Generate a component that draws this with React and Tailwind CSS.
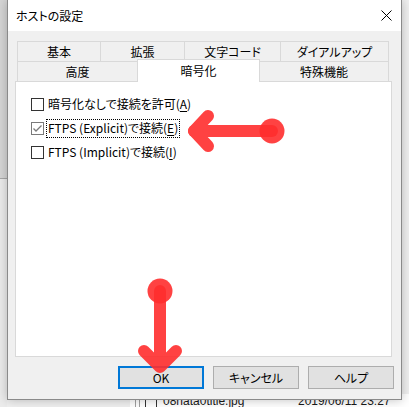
import React from 'react';

const jp = "font-['Noto_Sans_CJK_JP','Noto_Sans',sans-serif] [font-feature-settings:'palt']";

const row1 = [
  { label: '基本', w: 'w-[83px]' },
  { label: '拡張', w: 'w-[84px]' },
  { label: '文字コード', w: 'w-[96px]' },
  { label: 'ダイアルアップ', w: 'w-[109px]', last: true },
];

const row2 = [
  { label: '高度', w: 'w-[120px]' },
  { label: '暗号化', w: 'w-[123px]', selected: true },
  { label: '特殊機能', w: 'w-[129px]', last: true, noLeft: true },
];

function Tab({ label, w, selected, last, noLeft }) {
  if (selected) {
    return (
      <div className={`${w} relative z-10 -mt-[2px] h-[23px] flex items-center justify-center bg-white border-t border-l border-r border-[#d9d9d9] text-[12px] text-black`}>
        {label}
      </div>
    );
  }
  return (
    <div
      className={`${w} h-[20px] flex items-center justify-center bg-[#f0f0f0] border-t border-[#d9d9d9] text-[12px] text-black ${noLeft ? '' : 'border-l'} ${last ? 'border-r' : ''}`}
    >
      {label}
    </div>
  );
}

function Checkbox({ checked }) {
  return (
    <div className={`w-[13px] h-[13px] bg-white border flex items-center justify-center ${checked ? 'border-[#7a7a7a]' : 'border-[#333333]'}`}>
      {checked && (
        <svg width="11" height="11" viewBox="0 0 11 11">
          <path d="M1.5 5.5 L4 8 L9.5 2.5" fill="none" stroke="#7a7a7a" strokeWidth="1.3" />
        </svg>
      )}
    </div>
  );
}

function Option({ checked, focused, children }) {
  return (
    <div className="h-[24px] flex items-center">
      <Checkbox checked={checked} />
      <div className={`ml-[2px] h-[19px] px-[1px] flex items-center border ${focused ? 'border-dotted border-black' : 'border-transparent'}`}>
        {children}
      </div>
    </div>
  );
}

function Arrows() {
  return (
    <svg className="absolute inset-0 pointer-events-none z-20" width="409" height="407" viewBox="0 0 409 407">
      <g opacity="0.9" stroke="#ff2e2e" strokeWidth="12" strokeLinecap="round" strokeLinejoin="round" fill="none">
        <path d="M272 131 L194 131" />
        <path d="M208 116 L194 131 L208 146" />
        <path d="M160 291 L160 366" />
        <path d="M144 351 L160 367 L176 351" />
      </g>
      <g opacity="0.9" fill="#ff2e2e">
        <circle cx="272" cy="131" r="12.5" />
        <circle cx="160" cy="291" r="12.5" />
      </g>
    </svg>
  );
}

export default function App() {
  return (
    <div className={`relative w-[409px] h-[407px] overflow-hidden bg-[#f0f0f0] ${jp}`}>
      {/* app behind the dialog */}
      <div className="flex h-full">
        <div className="w-[7px] flex flex-col">
          <div className="h-[179px] bg-[#d6d6d6] border-b border-[#a8a8a8]" />
          <div className="flex-1 bg-[#ececec]" />
        </div>
        <div className="flex-1 flex flex-col">
          <div className="mt-auto h-[13px] ml-[123px] bg-white flex items-start text-[12px] leading-[14px] text-[#1a1a1a] font-['Liberation_Sans',sans-serif]">
            <div className="w-px h-full bg-[#a0a0a0] ml-[5px]" />
            <div className="w-px h-full bg-[#a0a0a0] ml-[3px]" />
            <div className="ml-[5px] mt-[2px] w-[12px] h-[12px] border border-[#333]" />
            <span className="ml-[6px] w-[135px]">08hata0title.jpg</span>
            <span>2019/06/11 23:27</span>
          </div>
        </div>
      </div>

      {/* dialog window */}
      <div className="absolute left-[7px] top-0 w-[395px] h-[400px] flex flex-col bg-[#f0f0f0] border-l border-r border-b border-[#8a8a8a] shadow-[0_0_10px_rgba(0,0,0,0.25)]">
        <div className="h-[31px] bg-white flex items-center pl-[8px] text-[12px] text-black">
          <span>ホストの設定</span>
          <svg className="ml-auto mr-[9px]" width="11" height="11" viewBox="0 0 11 11">
            <path d="M0.5 0.5 L10.5 10.5 M10.5 0.5 L0.5 10.5" stroke="#000" strokeWidth="1" />
          </svg>
        </div>

        <div className="mt-[10px] ml-[9px] w-[372px] flex">
          {row1.map((t) => <Tab key={t.label} {...t} />)}
        </div>
        <div className="ml-[9px] w-[372px] flex items-start h-[20px]">
          {row2.map((t) => <Tab key={t.label} {...t} />)}
        </div>

        <div className="ml-[7px] w-[377px] h-[276px] bg-white border border-[#d9d9d9] pt-[10px] pl-[15px] text-[12px] text-black">
          <Option>
            暗号化なしで接続を許可(<span className="underline underline-offset-2">A</span>)
          </Option>
          <Option checked focused>
            FTPS (Explicit)で接続(<span className="underline underline-offset-2">E</span>)
          </Option>
          <Option>
            FTPS (Implicit)で接続(<span className="underline underline-offset-2">I</span>)
          </Option>
        </div>

        <div className="mt-[9px] flex justify-end gap-[9px] pr-[7px] text-[12px] text-black">
          <div className="w-[86px] h-[23px] flex items-center justify-center bg-[#e1e1e1] border-2 border-[#0078d7]">OK</div>
          <div className="w-[86px] h-[23px] flex items-center justify-center bg-[#e1e1e1] border border-[#adadad]">キャンセル</div>
          <div className="w-[86px] h-[23px] flex items-center justify-center bg-[#e1e1e1] border border-[#adadad]">ヘルプ</div>
        </div>
      </div>

      <Arrows />
    </div>
  );
}
